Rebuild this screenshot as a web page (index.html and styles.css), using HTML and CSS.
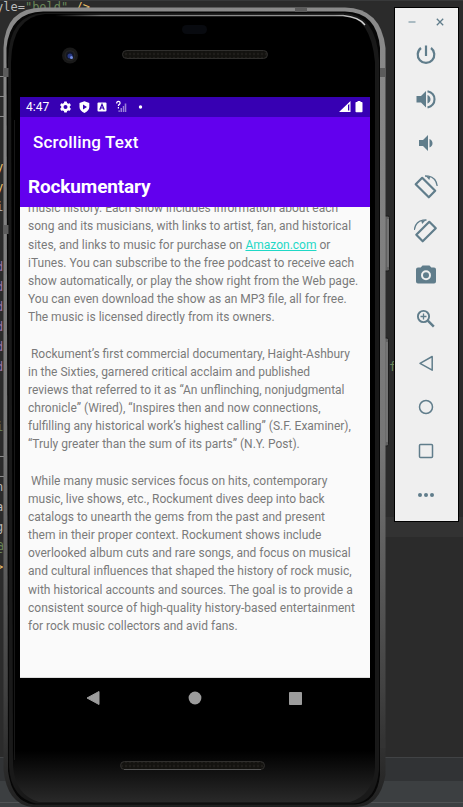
FILE: index.html
```html
<!DOCTYPE html>
<html lang="en">
<head>
<meta charset="utf-8">
<title>Scrolling Text</title>
<link rel="stylesheet" href="styles.css">
</head>
<body>
<div class="desktop">
  <div class="editor">
    <div class="line attr">yle=<b>"bold"</b> <i>/&gt;</i></div>
    <div class="line"></div><div class="line"></div>
    <div class="line rule"></div><div class="line rule"></div><div class="line rule"></div>
    <div class="line"></div><div class="line"></div>
    <div class="line tag">y</div><div class="line tag">y</div><div class="line attr">i</div>
    <div class="line"></div><div class="line"></div>
    <div class="line ns">d</div><div class="line ns">d</div><div class="line ns">d</div><div class="line ns">d</div><div class="line ns">d</div><div class="line ns">d</div>
    <div class="line"></div><div class="line"></div>
    <div class="line str">i</div>
    <div class="line rule"></div><div class="line rule"></div>
    <div class="line attr">n</div><div class="line attr">a</div><div class="line attr">g</div>
    <div class="line str">@</div><div class="line tag">&gt;</div>
  </div>
  <div class="status-strip"></div>
  <span class="stray">f</span>

  <div class="phone">
    <svg class="shell" width="390" height="807" viewBox="0 0 390 807" aria-hidden="true">
      <defs>
        <linearGradient id="rim" x1="0" y1="0" x2="0" y2="1"><stop offset="0" stop-color="#8b8b8b"/><stop offset=".55" stop-color="#767676"/><stop offset=".85" stop-color="#424242"/><stop offset="1" stop-color="#202020"/></linearGradient>
        <linearGradient id="glass" x1="0" y1="0" x2="0" y2="1"><stop offset="0" stop-color="#000"/><stop offset=".935" stop-color="#000"/><stop offset="1" stop-color="#292929"/></linearGradient>
        <linearGradient id="shine" x1="0" y1="0" x2="1" y2="0"><stop offset="0" stop-color="#777" stop-opacity="0"/><stop offset=".15" stop-color="#777"/><stop offset=".9" stop-color="#999"/><stop offset="1" stop-color="#ddd"/></linearGradient>
        <pattern id="mesh" width="4" height="4" patternUnits="userSpaceOnUse"><path d="M0 0h4v4H0z" fill="#13120f"/><circle cx="2" cy="2" r="1.200" fill="#1f1d1a"/></pattern>
      </defs>
      <rect x="384" y="216" width="5.500" height="55" rx="1.500" fill="#606060" stroke="#1c1c1c"/>
      <rect x="384" y="338" width="4.500" height="108" rx="1.500" fill="#606060" stroke="#1c1c1c"/>
      <path d="M388 219v48M387 342v100" stroke="#888"/>
      <path d="M3.500 48Q5 7.500 43 7.500H345Q381 8 385.500 48V775Q380 806 357 807H32Q7 804 3.500 770Z" fill="url(#rim)"/>
      <path d="M6.500 48Q10 12 43 11.500H345Q377 12 380 48V775Q377 803 355 804.500H34Q12 802 8 771Z" fill="#070707"/>
      <path d="M8 60Q9 14 44 13H344Q376 14 379 60V770Q376 802 354 803.500H36Q11 798 9 767Z" fill="#191919"/>
      <path d="M11 62Q12 17 45 14H342Q371 17 375 62V768Q373 795 350 802H39Q15 795 13 766Z" fill="url(#glass)"/>
      <path d="M14.500 120V760M376.500 70V760" stroke="#181818"/>
      <path d="M55 15.500H343Q359 17 365 25" fill="none" stroke="url(#shine)" stroke-width="1.300"/>
      <path d="M3.500 68h5v9h-5zM3.500 225h5v9h-5zM380 68h5.500v9H380zM295 8h12v4h-12z" fill="#5c5c5c"/>
      <path d="M380 739h5.500v9H380z" fill="#333"/>
      <rect x="182" y="25" width="25" height="9" rx="4.500" fill="#080a0f"/>
      <rect x="122.500" y="50.500" width="145" height="8" rx="4" fill="url(#mesh)" stroke="#302f2d"/>
      <rect x="120.500" y="761.500" width="144" height="8" rx="4" fill="url(#mesh)" stroke="#302f2d"/>
      <path d="M124 769.500H261" stroke="#555"/>
      <circle cx="70" cy="55.500" r="8" fill="#191919"/><circle cx="70" cy="55.500" r="5.500" fill="#232323"/><circle cx="70" cy="55.500" r="4" fill="#111524"/>
      <circle cx="70" cy="56" r="2.500" fill="#283a84"/><circle cx="71.500" cy="57.500" r="1.500" fill="#738ce0"/>
    </svg>
    <main class="screen">
      <div class="statusbar">
        <span class="clock">4:47</span>
        <svg class="notif" width="84" height="14" viewBox="0 0 84 14" aria-hidden="true">
          <path d="M5.300 1.500h2.400l.4 1.500 1.200.7 1.500-.5 1.100 2-1.100 1v1.600l1.100 1-1.100 2-1.500-.4-1.200.7-.4 1.500H5.300l-.4-1.500-1.200-.7-1.500.4-1.100-2 1.100-1V6.200l-1.100-1 1.100-2 1.500.5L4.900 3zM6.500 5a2 2 0 1 0 0 4 2 2 0 0 0 0-4z" fill="#fff" fill-rule="evenodd"/>
          <path d="M25.400 1.300 30.300 3v4q0 3.700-4.900 6-4.900-2.300-4.900-6V3zM24 4.600v5l4-2.500z" fill="#fff" fill-rule="evenodd"/>
          <rect x="38.500" y="2.500" width="9" height="9" rx="1" fill="#fff"/><path d="m40.800 9.800 2.200-5.500 2.200 5.500M41.600 8h2.800" fill="none" stroke="#3700b3" stroke-width="1.200"/>
          <path d="M57.700 3.400q0-2 1.700-2t1.700 1.700q0 1-1 1.500-.7.500-.7 1.400M59.400 7v1.400" fill="none" stroke="#fff" stroke-width="1.200"/>
          <path d="M59.500 12v-1.800h1.300V12M61.500 12V8H63v4M63.800 12V6h1.300v6M65.700 12V3.500h1.600V12" fill="#9b80d9"/>
          <circle cx="81.500" cy="7" r="1.700" fill="#fff"/>
        </svg>
        <svg class="sys" width="24" height="14" viewBox="0 0 24 14" aria-hidden="true">
          <path d="M0 12 11.500 1v11zM9 5v5.500h1.300V4z" fill="#fff" fill-rule="evenodd"/>
          <path d="M18.500 1h3v1h1.200q.8 0 .8.800v8.600q0 .8-.8.800h-5.400q-.8 0-.8-.8V2.800q0-.8.800-.8h1.200z" fill="#fff"/>
        </svg>
      </div>
      <header class="appbar">Scrolling Text</header>
      <h1 class="heading">Rockumentary</h1>
      <div class="scroller">
        <article class="article">
          <div class="copy">music history. Each show includes information about each
song and its musicians, with links to artist, fan, and historical</div>
          <div class="copy linked"><span>sites, and links to music for purchase on </span><a class="link">Amazon.com</a><span> or</span></div>
          <div class="copy">iTunes. You can subscribe to the free podcast to receive each
show automatically, or play the show right from the Web page.
You can even download the show as an MP3 file, all for free.
The music is licensed directly from its owners.

 Rockument’s first commercial documentary, Haight-Ashbury
in the Sixties, garnered critical acclaim and published
reviews that referred to it as “An unflinching, nonjudgmental
chronicle” (Wired), “Inspires then and now connections,
fulfilling any historical work’s highest calling” (S.F. Examiner),
“Truly greater than the sum of its parts” (N.Y. Post).

 While many music services focus on hits, contemporary
music, live shows, etc., Rockument dives deep into back
catalogs to unearth the gems from the past and present
them in their proper context. Rockument shows include
overlooked album cuts and rare songs, and focus on musical
and cultural influences that shaped the history of rock music,
with historical accounts and sources. The goal is to provide a
consistent source of high-quality history-based entertainment
for rock music collectors and avid fans.</div>
        </article>
      </div>
      <nav class="navbar">
        <svg width="14" height="16" viewBox="0 0 14 16"><path d="M1 8 13 1.500v13z" fill="#9c9c9c" stroke="#9c9c9c" stroke-linejoin="round"/></svg>
        <svg width="14" height="14" viewBox="0 0 14 14"><circle cx="7" cy="7" r="6.400" fill="#9c9c9c"/></svg>
        <svg width="13" height="13" viewBox="0 0 13 13"><rect width="13" height="13" rx=".8" fill="#9c9c9c"/></svg>
      </nav>
    </main>
  </div>

  <aside class="toolbar">
    <div class="window-controls">
      <svg width="8" height="8" viewBox="0 0 8 8"><path d="M.5 4h7" stroke="#9eb1ba" stroke-width="1.700"/></svg>
      <svg width="8" height="8" viewBox="0 0 8 8"><path d="m.8.800 6.400 6.400m0-6.400L.8 7.200" stroke="#607d8b" stroke-width="1.300"/></svg>
    </div>
    <svg class="tool" viewBox="0 0 24 24"><path d="M12 2.500V13M7 5a8.300 8.300 0 1 0 10 0" fill="none" stroke="#607d8b" stroke-width="2.200"/></svg>
    <svg class="tool" viewBox="0 0 24 24"><path d="M2.500 9v6.500h4.500l5 5V4L7 9zM13.500 8v8.500q3-1.200 3-4.200t-3-4.300z" fill="#607d8b"/><path d="M13.500 4.200q7 1.600 7 8t-7 8.200" fill="none" stroke="#607d8b" stroke-width="2.100"/></svg>
    <svg class="tool" viewBox="0 0 24 24"><path d="M5 9v6h4l5 5V4L9 9zM15.500 8v8.500q3-1.200 3-4.200t-3-4.300z" fill="#607d8b"/></svg>
    <svg class="tool" viewBox="0 0 24 24"><g id="rot"><path d="M8.200 2.800 21.200 15.800 14.800 22.300 1.700 9.300z" fill="none" stroke="#607d8b" stroke-width="2.200" stroke-linejoin="round"/><path d="m11 1 3.500.2q7.500 1.300 8.700 9.800" fill="none" stroke="#607d8b" stroke-width="1.300"/><path d="m11.500.8 3.800 4.200.9-3z" fill="#607d8b"/></g></svg>
    <svg class="tool" viewBox="0 0 24 24"><use href="#rot" transform="matrix(-1 0 0 1 23.500 0)"/></svg>
    <svg class="tool" viewBox="0 0 24 24"><path d="M8.500 2.500h7l1.800 2H20q2 0 2 2v12q0 2-2 2H4q-2 0-2-2v-12q0-2 2-2h2.700zM12 7.300a5 5 0 1 0 0 10 5 5 0 0 0 0-10z" fill="#607d8b" fill-rule="evenodd"/><circle cx="12" cy="12.300" r="3" fill="#607d8b"/></svg>
    <svg class="tool" viewBox="0 0 24 24"><g fill="none" stroke="#607d8b"><circle cx="9.500" cy="9.500" r="5.600" stroke-width="1.900"/><path d="m13.800 13.700 6 6" stroke-width="2.500"/><path d="M6.500 9.500h6M9.500 6.500v6" stroke-width="1.300"/></g></svg>
    <svg class="tool" viewBox="0 0 24 24"><path d="M6 12.300 18.200 5.500v13.700z" fill="none" stroke="#607d8b" stroke-width="1.500" stroke-linejoin="round"/></svg>
    <svg class="tool" viewBox="0 0 24 24"><circle cx="12" cy="12" r="6.500" fill="none" stroke="#607d8b" stroke-width="1.500"/></svg>
    <svg class="tool" viewBox="0 0 24 24"><rect x="5.500" y="5.500" width="13" height="13" rx="1" fill="none" stroke="#607d8b" stroke-width="1.500"/></svg>
    <svg class="tool" viewBox="0 0 24 24"><g fill="#607d8b"><circle cx="6" cy="12" r="2"/><circle cx="12" cy="12" r="2"/><circle cx="18" cy="12" r="2"/></g></svg>
  </aside>
</div>
</body>
</html>
```
FILE: styles.css
```css
* { box-sizing: border-box; }
body { margin: 0; font-family: Roboto, sans-serif; }
.desktop { position: relative; width: 463px; height: 807px; overflow: hidden; background: #2b2b2b; border-top: 1px solid #38393a; }
.editor { position: absolute; left: -4px; top: -4px; font: 12px/20px "DejaVu Sans Mono", monospace; }
.line { width: 100px; height: 20px; white-space: pre; }
.line b { font-weight: 400; color: #6a8759; }
.line i { font-style: normal; color: #e8bf6a; }
.attr { color: #bababa; }
.tag { color: #e8bf6a; }
.ns { color: #9876aa; }
.str { color: #6a8759; }
.rule { border-bottom: 1px solid #8a8a8a; }
.status-strip { position: absolute; left: 0; right: 0; top: 756px; height: 50px; background: linear-gradient(#414345 1px, #313335 1px 24px, #3c3f41 24px 45px, #505254 45px 46px, #3c3f41 46px); }
.desktop::before { content: ""; position: absolute; left: 380px; right: 0; top: 516px; height: 20px; background: #323232; }
.stray { position: absolute; left: 389px; top: 357px; font: 12px/18px "DejaVu Sans Mono", monospace; color: #6a8759; }
.phone { position: absolute; left: 0; top: -1px; width: 390px; height: 807px; padding: 97px 20px 0; }
.shell { position: absolute; left: 0; top: 0; }
.screen { position: relative; width: 350px; height: 622px; display: flex; flex-direction: column; }
.statusbar { height: 20px; padding: 0 7px 0 6px; display: flex; align-items: center; background: #3700b3; color: #fff; font-size: 12px; }
.clock { width: 23px; }
.notif { margin-left: 9.500px; }
.sys { margin-left: auto; }
.appbar { height: 49px; padding-left: 13px; background: #6200ee; color: #fff; font-size: 17px; font-weight: 500; line-height: 50px; letter-spacing: .15px; }
.heading { height: 41px; margin: 0; padding-left: 8px; background: #6200ee; color: #fff; font-size: 19px; font-weight: 700; line-height: 42px; letter-spacing: -.15px; }
.scroller { height: 471px; overflow: hidden; background: #fafafa; border-bottom: 1px solid #ddd; }
.article { margin-top: -7.700px; padding-left: 8px; color: #7a7a7a; font-size: 12px; line-height: 18.160px; }
.copy { white-space: pre; }
.linked { display: flex; }
.link { color: #1fd8c6; text-decoration: underline; }
.navbar { height: 41px; padding: 0 68px 1px 66px; display: flex; align-items: center; justify-content: space-between; }
.toolbar { position: absolute; left: 394px; top: 6px; width: 65px; height: 515px; padding-right: 1px; display: flex; flex-direction: column; align-items: center; gap: 20px; background: #efefef; border: 1px solid #000; }
.window-controls { width: 36px; height: 8px; margin: 10px 0 -3px; display: flex; justify-content: space-between; flex: none; }
.tool { width: 24px; height: 24px; flex: none; }
```
